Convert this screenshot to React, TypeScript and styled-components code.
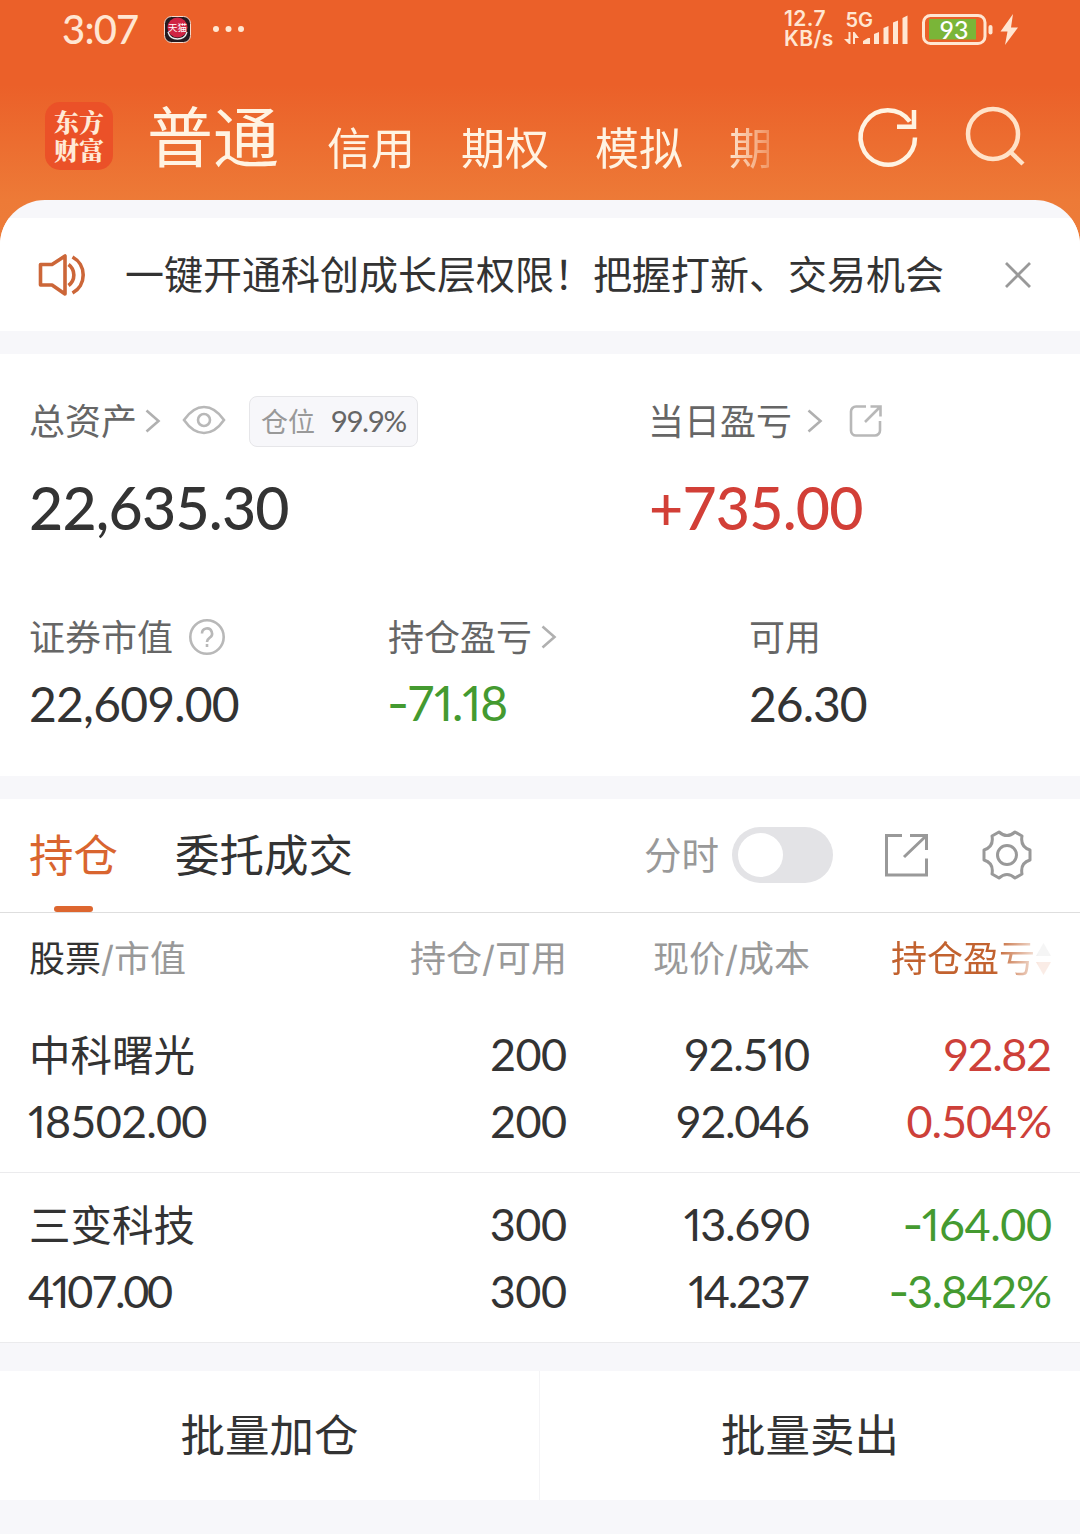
import React from 'react';
import styled, { createGlobalStyle } from 'styled-components';

const Global = createGlobalStyle`
  * { box-sizing: border-box; }
  body { margin: 0; background: #f7f7fa; }
`;

const Screen = styled.div`
  width: 1080px;
  height: 1534px;
  overflow: hidden;
  display: flex;
  flex-direction: column;
  background: linear-gradient(#eb6029 0, #eb6029 85px, #ed7a37 200px, #ed7d3a 250px);
  font-family: Inter, 'Noto Sans CJK SC', sans-serif;
  color: #333;
  white-space: nowrap;
`;

const Text = styled.span<{ $size: number; $color?: string; $track?: number; $weight?: number; $ml?: number }>`
  font-size: ${p => p.$size}px;
  line-height: 1;
  color: ${p => p.$color ?? '#333'};
  letter-spacing: ${p => p.$track ?? 0}px;
  margin-right: ${p => -(p.$track ?? 0)}px;
  margin-left: ${p => p.$ml ?? 0}px;
  font-weight: ${p => p.$weight ?? 400};
`;
const Label = styled(Text)`
  padding-top: 2px;
`;
const Figures = styled(Text)`
  font-family: Lato, sans-serif;
  font-variant-numeric: tabular-nums;
`;
const One = styled.span`
  font-variant-numeric: proportional-nums;
`;
const Dash = styled.span`
  font-family: Inter, sans-serif;
  font-variant-numeric: proportional-nums;
  margin: 0 -1px;
`;

type DigitsProps = { $size: number; $color?: string; $track?: number; $weight?: number; $ml?: number; children: string };

/* Fixed-width figures, except for a narrow 1 and a wide minus sign. */
const Digits = ({ children, ...style }: DigitsProps) => (
  <Figures {...style}>
    {children.split(/([1-])/).filter(Boolean).map((part, i) => {
      if (part === '1') return <One key={i}>1</One>;
      if (part === '-') return <Dash key={i}>-</Dash>;
      return part;
    })}
  </Figures>
);

const StatusBar = styled.div`
  height: 58px;
  flex: none;
  display: flex;
  align-items: center;
  padding: 0 62px 0 61px;
`;
const Clock = styled.div`
  width: 77px;
  margin-right: 25px;
  display: flex;
`;
const Push = styled.div`flex: 1;`;
const NetSpeed = styled.div`
  width: 51px;
  margin-right: 9px;
  font-size: 21px;
  letter-spacing: 0.4px;
  line-height: 20px;
  font-weight: 600;
  color: #ffe6d2;
`;

const TitleBar = styled.div`
  height: 142px;
  flex: none;
  display: flex;
  padding: 0 54px 0 45px;
`;
const Logo = styled.div`
  width: 68px;
  height: 68px;
  margin: 44px 34px 0 0;
  border-radius: 15px;
  background: #eb5128;
  display: flex;
  flex-direction: column;
  align-items: center;
  justify-content: center;
  padding-bottom: 2px;
  font-size: 25px;
  line-height: 28px;
  font-weight: 900;
  font-family: 'Noto Serif CJK SC', 'Noto Sans CJK SC', sans-serif;
  color: #ffe9d6;
`;
const Accounts = styled.div`
  width: 622px;
  display: flex;
  overflow: hidden;
  mask-image: linear-gradient(90deg, #000 575px, transparent 642px);
`;
const Account = styled.span<{ $active?: boolean }>`
  flex: none;
  font-size: ${p => (p.$active ? 66 : 44)}px;
  line-height: 1;
  margin-top: ${p => (p.$active ? 47 : 69)}px;
  margin-right: ${p => (p.$active ? 48 : 46)}px;
  color: #fff3e2;
`;
const Tools = styled.div`
  display: flex;
  margin-top: 44px;
  margin-left: 85px;
  gap: 42px;
`;

const Sheet = styled.main`
  flex: 1;
  padding-top: 18px;
  background: #f7f7fa;
  border-radius: 45px 45px 0 0;
  overflow: hidden;
`;
const Notice = styled.section`
  height: 113px;
  padding: 0 46px 0 36px;
  display: flex;
  align-items: center;
  background: #fff;
`;
const Assets = styled.section`
  height: 422px;
  margin: 23px 0;
  padding: 37px 29px 0;
  background: #fff;
`;
const Columns = styled.div<{ $cols: string; $gap: number }>`
  display: grid;
  grid-template-columns: ${p => p.$cols};
  margin-bottom: ${p => p.$gap}px;
`;
const Line = styled.div<{ $h: number; $down?: number }>`
  height: ${p => p.$h}px;
  padding-top: ${p => p.$down ?? 0}px;
  display: flex;
  align-items: center;
`;
const Badge = styled.div`
  width: 169px;
  height: 51px;
  margin-left: 23px;
  padding: 0 10px 0 11px;
  border: 1px solid #e6e6e9;
  border-radius: 8px;
  background: #f7f7fa;
  display: flex;
  align-items: center;
  justify-content: space-between;
`;

const Positions = styled.section`
  height: 544px;
  background: #fff;
`;
const TabBar = styled.div`
  height: 114px;
  padding: 0 46px 0 29px;
  display: flex;
  border-bottom: 1px solid #dedede;
`;
const Tab = styled.div`
  height: 113px;
  margin-right: 57px;
  display: flex;
  flex-direction: column;
  align-items: center;
  justify-content: space-between;
  padding-top: 35px;
`;
const Marker = styled.div`
  width: 39px;
  height: 6px;
  border-radius: 3px;
  background: #dd662f;
`;
const Controls = styled.div`
  flex: 1;
  height: 112px;
  display: flex;
  align-items: center;
  justify-content: flex-end;
`;
const Toggle = styled.div`
  width: 101px;
  height: 56px;
  margin: 0 49px 0 13px;
  padding: 6px;
  border-radius: 28px;
  background: #e3e3e6;
`;
const Knob = styled.div`
  width: 45px;
  height: 44px;
  border-radius: 50%;
  background: #fff;
`;

const Row = styled.div<{ $head?: boolean }>`
  height: ${p => (p.$head ? 90 : 170)}px;
  padding: ${p => (p.$head ? '1px' : '18px')} 28px 0 28px;
  display: grid;
  grid-template-columns: 1fr 238px 243px 242px;
  border-bottom: ${p => (p.$head ? 0 : 1)}px solid #ebebed;
`;
const Cell = styled.div<{ $left?: boolean }>`
  display: flex;
  flex-direction: column;
  align-items: ${p => (p.$left ? 'flex-start' : 'flex-end')};
`;
const FadeLine = styled(Line)`
  mask-image: linear-gradient(90deg, #000 104px, rgba(0, 0, 0, 0.12) 148px);
`;

const Actions = styled.div`
  height: 129px;
  margin-top: 28px;
  display: grid;
  grid-template-columns: 540px 540px;
  background: #fff;
`;
const Action = styled.div`
  display: flex;
  align-items: center;
  justify-content: center;
  padding-top: 2px;
  &:first-child { border-right: 1px solid #f4f4f6; }
`;

const Chevron = ({ ml }: { ml: number }) => (
  <svg width="16" height="24" viewBox="0 0 16 24" style={{ marginLeft: ml }} fill="none" stroke="#b0b0b0" strokeWidth="2.6">
    <path d="M1.5 1.5 13.5 12 1.5 22.5" />
  </svg>
);

type Tone = '#cd4039' | '#449a30';
type Figure = [text: string, track: number];
type Holding = { name: string; value: Figure; qty: Figure; price: Figure; cost: Figure; gain: Figure; rate: Figure; tone: Tone };

const holdings: Holding[] = [
  {
    name: '中科曙光', value: ['18502.00', -0.8], qty: ['200', -0.7],
    price: ['92.510', -1.3], cost: ['92.046', -1.3],
    gain: ['92.82', -1.5], rate: ['0.504%', -1.1], tone: '#cd4039',
  },
  {
    name: '三变科技', value: ['4107.00', -2.3], qty: ['300', -0.5],
    price: ['13.690', -1.3], cost: ['14.237', -2.2],
    gain: ['-164.00', -0.5], rate: ['-3.842%', -1.2], tone: '#449a30',
  },
];

const Num = ({ figure: [text, track], color }: { figure: Figure; color?: string }) => (
  <Line $h={67}><Digits $size={45} $track={track} $color={color}>{text}</Digits></Line>
);

export default function App() {
  return (
    <Screen>
      <Global />
      <StatusBar>
        <Clock><Digits $size={40} $weight={500} $ml={1} $track={-0.8} $color="#ffe6d2">3:07</Digits></Clock>
        <svg width="84" height="30" viewBox="0 0 84 30">
          <rect x="1.500" y="2.500" width="26" height="26" rx="7" fill="#241a20" stroke="#f5d9cb" />
          <circle cx="14.500" cy="13.500" r="10" fill="#cf2443" />
          <path d="M5 18q2 7 9.500 7t9.500-7" fill="none" stroke="#eee" strokeWidth="1.300" />
          <text x="14.500" y="17" fontSize="9.500" textAnchor="middle" fill="#fff">天猫</text>
          <circle cx="53" cy="15" r="3" fill="#ffe6d2" />
          <circle cx="65.500" cy="15" r="3" fill="#ffe6d2" />
          <circle cx="78" cy="15" r="3" fill="#ffe6d2" />
        </svg>
        <Push />
        <NetSpeed>12.7<br />KB/s</NetSpeed>
        <svg width="174" height="40" viewBox="844 8 174 40" fill="#ffe6d2">
          <text x="845.500" y="26" fontSize="20" fontWeight="600">5G</text>
          <path d="M844 38h4.500v-7h2v12h-1.500zM853 43V31h1.500l4.500 6h-4v6zM863 43v-3l5-3h2v6zM874 43V33l5-2v12zM883.500 43V27l5-2v18zM893 43V21.500l5-2V43zM902.500 43V17l5-2.500V43z" />
          <rect x="923.500" y="14.500" width="61.500" height="28" rx="7" fill="none" stroke="#ffe6d2" strokeWidth="3" />
          <rect x="929" y="18" width="47" height="20.500" fill="#7ab538" />
          <text x="954" y="37.500" fontSize="25" fontFamily="Lato, sans-serif" fontWeight="500" textAnchor="middle" fill="#fff">93</text>
          <rect x="988.500" y="24" width="4" height="9.500" rx="2" />
          <path d="M1013 13 1000.500 30.500h7L1005 44l13-17.500h-7z" />
        </svg>
      </StatusBar>

      <TitleBar>
        <Logo><span>东方</span><span>财富</span></Logo>
        <Accounts>
          <Account $active>普通</Account>
          <Account>信用</Account>
          <Account>期权</Account>
          <Account>模拟</Account>
          <Account>期</Account>
        </Accounts>
        <Tools>
          <svg width="66" height="70" viewBox="854 102 66 70" fill="none" stroke="#fff3e2" strokeWidth="4.500">
            <path d="M915 137.500a27.200 27.200 0 1 1-5.200-16M897 126.700h17V110" />
          </svg>
          <svg width="64" height="70" viewBox="962 102 64 70" fill="none" stroke="#ffe2c8" strokeWidth="4.500">
            <circle cx="993" cy="134" r="25" />
            <path d="m1010.500 152 12.500 12" />
          </svg>
        </Tools>
      </TitleBar>

      <Sheet>
        <Notice>
          <svg width="52" height="46" viewBox="36 251.500 52 46" fill="none" stroke="#cc6638" strokeWidth="3.600">
            <path d="M40.500 264H52l13-8.500v38l-13-9H40.500z" strokeLinejoin="round" />
            <path d="M68.500 264a13 13 0 0 1 0 21M72.500 256.500a20.500 20.500 0 0 1 0 36" />
          </svg>
          <Text $size={39} $ml={37}>一键开通科创成长层权限！把握打新、交易机会</Text>
          <Push />
          <svg width="32" height="32" viewBox="0 0 32 32" stroke="#999" strokeWidth="2.800">
            <path d="m4 4 24 24M28 4 4 28" />
          </svg>
        </Notice>

        <Assets>
          <Columns $cols="619px 1fr" $gap={41}>
            <div>
              <Line $h={60}>
                <Label $size={36} $color="#666">总资产</Label>
                <Chevron ml={8} />
                <svg width="44" height="32" viewBox="0 0 44 32" style={{ marginLeft: 21 }} fill="none" stroke="#b8b8b8" strokeWidth="2.600">
                  <path d="M2 15Q11 2 22 2t20 13Q33 28 22 28T2 15z" />
                  <circle cx="22" cy="15" r="6" />
                </svg>
                <Badge>
                  <Label $size={27} $color="#999">仓位</Label>
                  <Digits $size={29.5} $color="#666" $track={-1.4}>99.9%</Digits>
                </Badge>
              </Line>
              <Line $h={112}><Digits $size={59} $weight={500} $track={-0.8}>22,635.30</Digits></Line>
            </div>
            <div>
              <Line $h={60}>
                <Label $size={36} $color="#666">当日盈亏</Label>
                <Chevron ml={15} />
                <svg width="34" height="34" viewBox="0 0 34 34" style={{ marginLeft: 26 }} fill="none" stroke="#b8b8b8" strokeWidth="2.600">
                  <path d="M17 2.500H7a5 5 0 0 0-5 5v19a5 5 0 0 0 5 5h19a5 5 0 0 0 5-5V17M21.500 2.500h10v10M31 3 16 18" />
                </svg>
              </Line>
              <Line $h={112}><Digits $size={59} $weight={500} $ml={1} $track={-0.8} $color="#d23f37">+735.00</Digits></Line>
            </div>
          </Columns>
          <Columns $cols="359px 361px 1fr" $gap={0}>
            <div>
              <Line $h={66}>
                <Label $size={36} $color="#666">证券市值</Label>
                <svg width="38" height="38" viewBox="0 0 38 38" style={{ marginLeft: 15 }} fill="none" stroke="#b8b8b8" strokeWidth="2.600">
                  <circle cx="19" cy="19" r="16.700" />
                  <path d="M14 15.500a5 5 0 1 1 7.500 4.300Q19 21.500 19 24M19 26v3" />
                </svg>
              </Line>
              <Line $h={67}><Digits $size={48} $track={-0.8}>22,609.00</Digits></Line>
            </div>
            <div>
              <Line $h={66}>
                <Label $size={36} $color="#666">持仓盈亏</Label>
                <Chevron ml={9} />
              </Line>
              <Line $h={67}><Digits $size={48} $track={-1} $color="#449a30">-71.18</Digits></Line>
            </div>
            <div>
              <Line $h={66}><Label $size={36} $color="#666">可用</Label></Line>
              <Line $h={67}><Digits $size={48} $track={-1}>26.30</Digits></Line>
            </div>
          </Columns>
        </Assets>

        <Positions>
          <TabBar>
            <Tab><Text $size={44.5} $color="#d9652f">持仓</Text><Marker /></Tab>
            <Tab><Text $size={44.5}>委托成交</Text></Tab>
            <Controls>
              <Label $size={37.5} $color="#999">分时</Label>
              <Toggle><Knob /></Toggle>
              <svg width="48" height="48" viewBox="882 831 48 48" fill="none" stroke="#999" strokeWidth="3">
                <path d="M902 835.500H886.500v39.500H926.500V858.500M910 835.500H926.500V850M926 836 904 857" />
              </svg>
              <svg width="54" height="54" viewBox="980 828 54 54" style={{ marginLeft: 50 }} fill="none" stroke="#999" strokeWidth="3" strokeLinejoin="round">
                <circle cx="1007" cy="855" r="9.500" />
                <path d="M999 832q8 7 16 0l7 4q-2 11 8 14v10q-10 3-8 14l-7 4q-8-7-16 0l-7-4q2-11-8-14v-10q10-3 8-14z" />
              </svg>
            </Controls>
          </TabBar>

          <Row $head>
            <Cell $left><Line $h={89}><Text $size={36} $ml={1}>股票</Text><Text $size={36} $color="#999">/市值</Text></Line></Cell>
            <Cell><Line $h={89}><Text $size={36} $color="#999">持仓/可用</Text></Line></Cell>
            <Cell><Line $h={89}><Text $size={36} $color="#999">现价/成本</Text></Line></Cell>
            <Cell>
              <FadeLine $h={89}>
                <Text $size={36} $color="#c2622f">持仓盈亏</Text>
                <svg width="17" height="34" viewBox="0 0 17 34">
                  <path d="M8.500 1 16 14H1z" fill="#aaa" />
                  <path d="M8.500 33 16 20H1z" fill="#d9652f" />
                </svg>
              </FadeLine>
            </Cell>
          </Row>

          {holdings.map(h => (
            <Row key={h.name}>
              <Cell $left>
                <Line $h={67} $down={4}><Text $size={41.5} $ml={1}>{h.name}</Text></Line>
                <Num figure={h.value} />
              </Cell>
              <Cell><Num figure={h.qty} /><Num figure={h.qty} /></Cell>
              <Cell><Num figure={h.price} /><Num figure={h.cost} /></Cell>
              <Cell><Num figure={h.gain} color={h.tone} /><Num figure={h.rate} color={h.tone} /></Cell>
            </Row>
          ))}
        </Positions>

        <Actions>
          <Action><Text $size={44.5}>批量加仓</Text></Action>
          <Action><Text $size={44.5}>批量卖出</Text></Action>
        </Actions>
      </Sheet>
    </Screen>
  );
}
